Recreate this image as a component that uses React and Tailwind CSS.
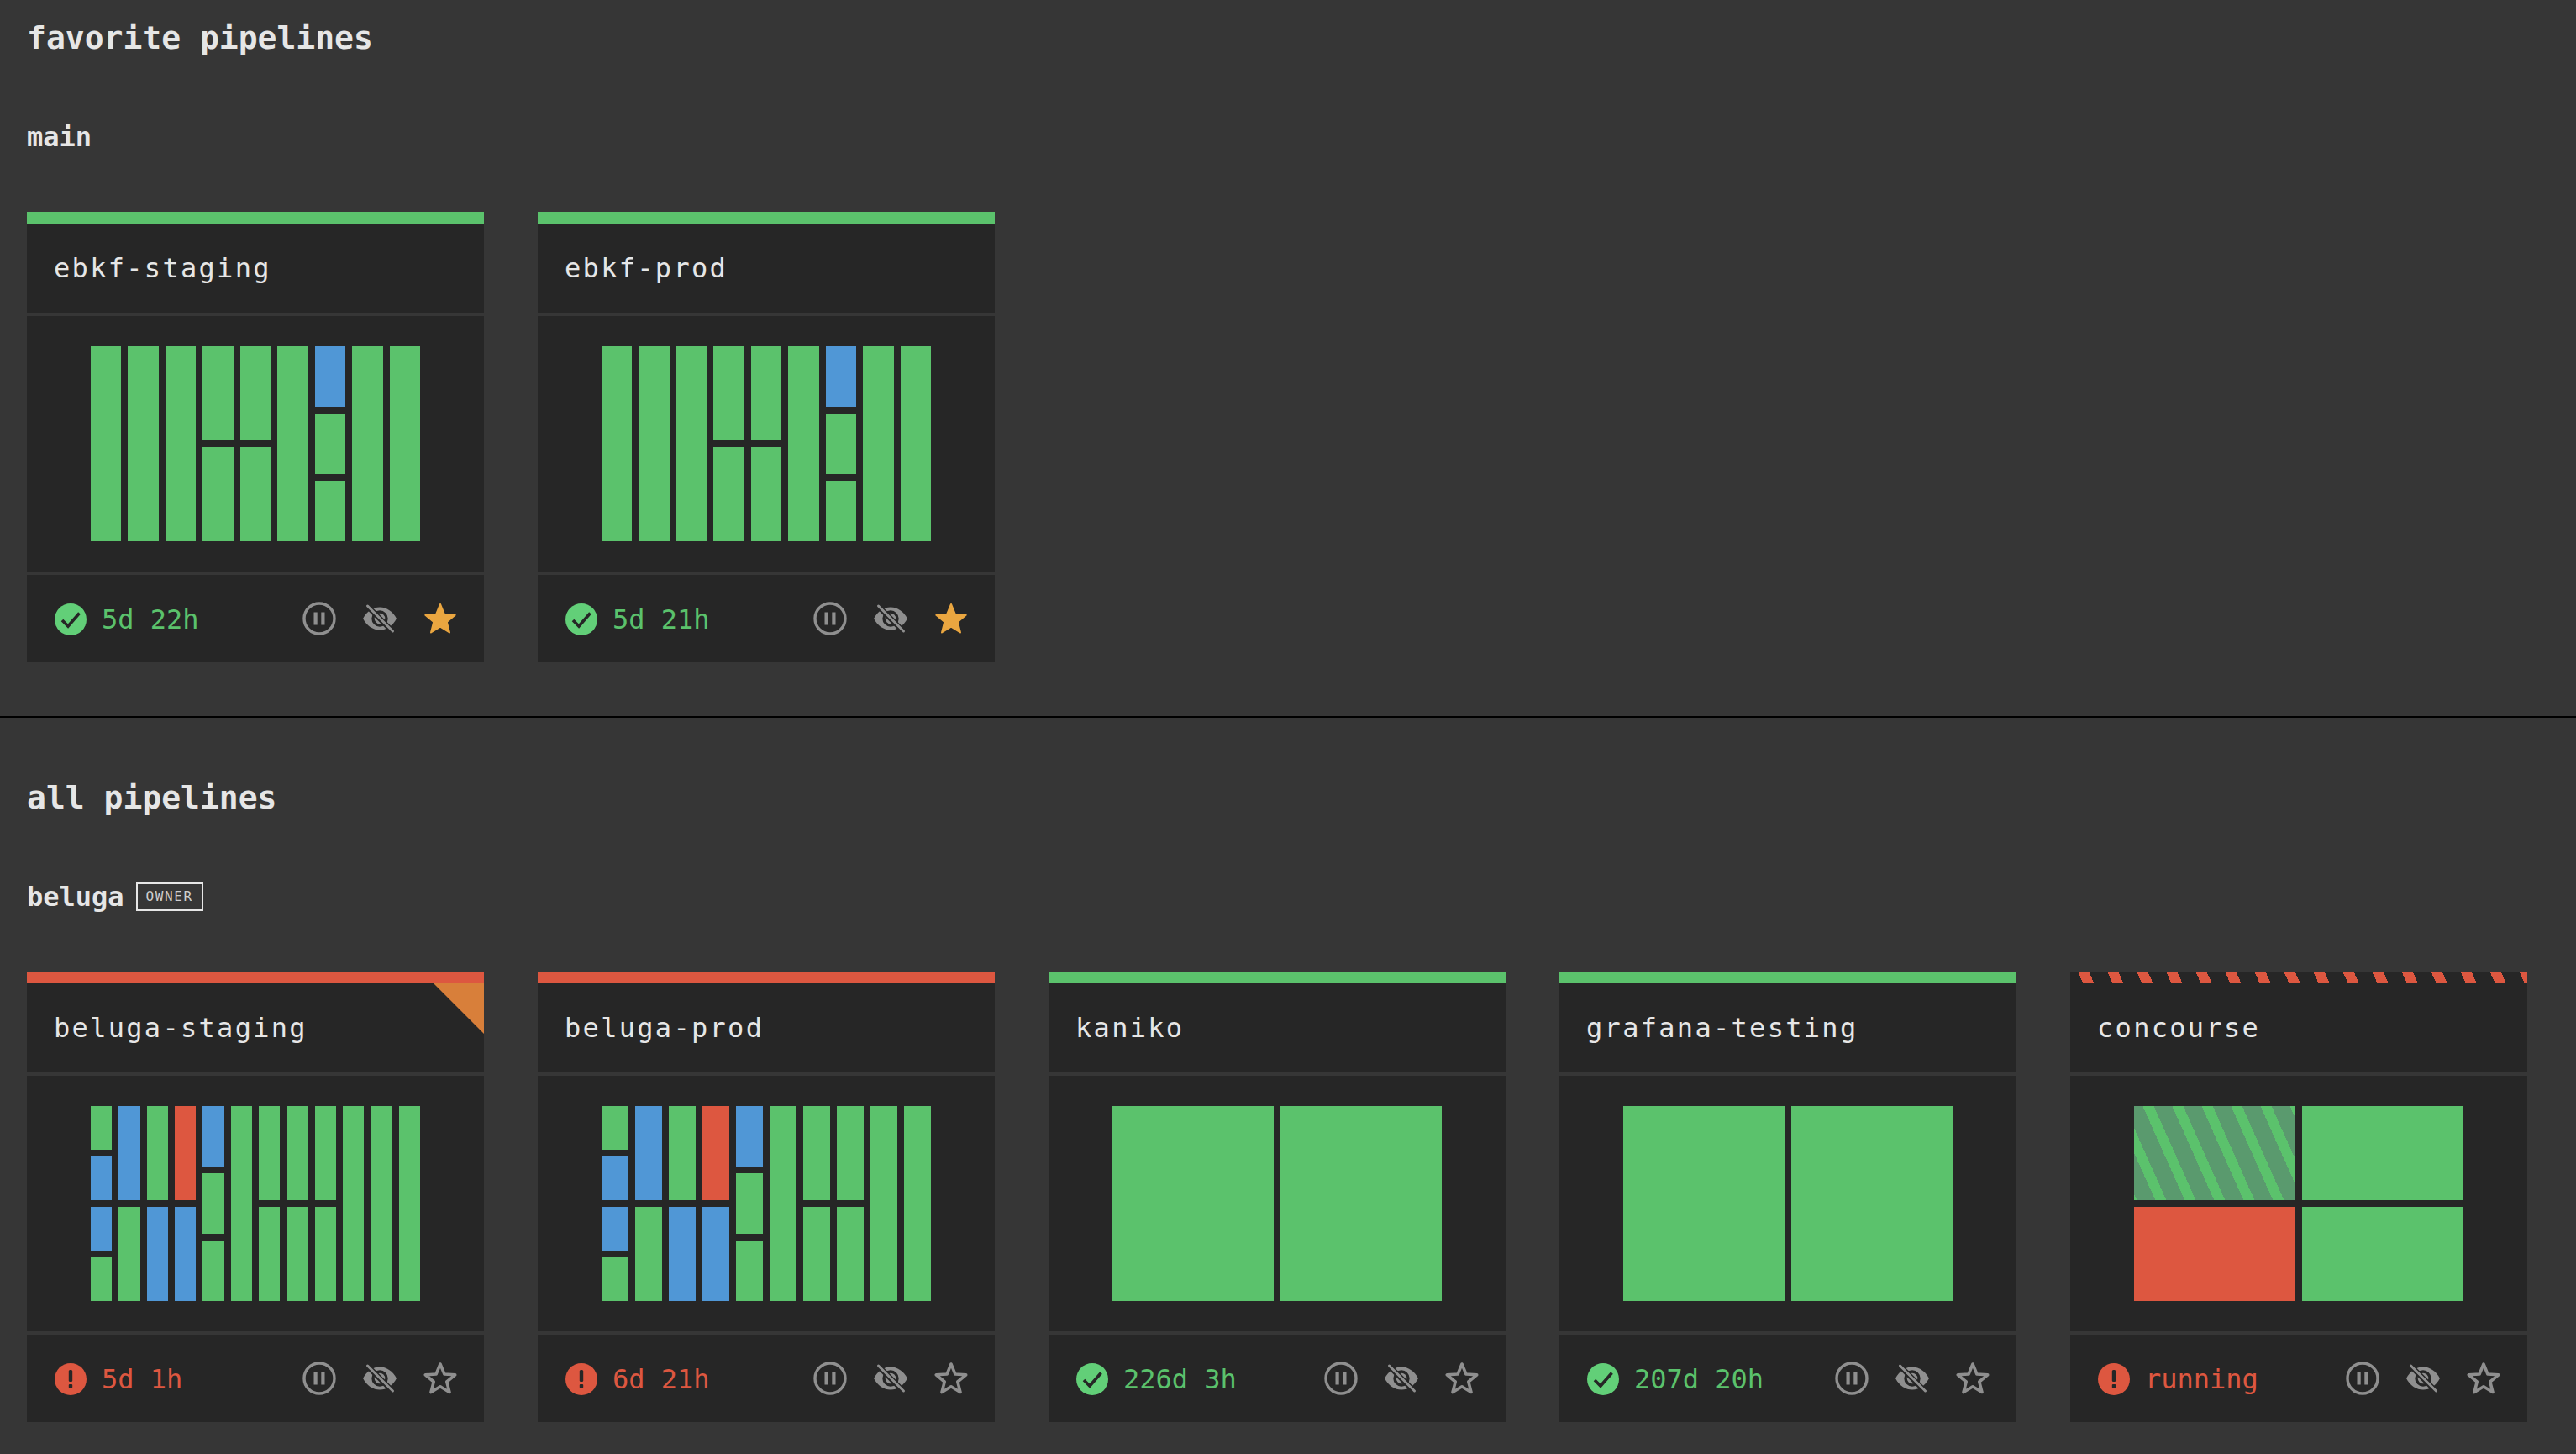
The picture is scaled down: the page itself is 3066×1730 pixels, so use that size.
import React from "react";

const FONT = "font-['DejaVu_Sans_Mono',monospace]";

const tint = {
  g: "bg-[#5bc26c]",
  b: "bg-[#5097d6]",
  r: "bg-[#dd5740]",
  s: "bg-[repeating-linear-gradient(66deg,#5bc26c_-9px,#5bc26c_3px,#5a9a6e_3px,#5a9a6e_23px)]",
};

const favBars = ["g", "g", "g", "gg", "gg", "g", "bgg", "g", "g"];
const stagingBars = ["gbbg", "bg", "gb", "rb", "bgg", "g", "gg", "gg", "gg", "g", "g", "g"];
const prodBars = ["gbbg", "bg", "gb", "rb", "bgg", "g", "gg", "gg", "g", "g"];

const CheckIcon = () => (
  <svg width="40" height="40" viewBox="0 0 40 40" className="shrink-0">
    <circle cx="20" cy="21" r="19" fill="#62cf78" />
    <path d="M10 22l7 7L30.500 13.500" fill="none" stroke="#262626" strokeWidth="3.600" />
  </svg>
);

const FailIcon = () => (
  <svg width="40" height="40" viewBox="0 0 40 40" className="shrink-0">
    <circle cx="20" cy="21" r="19" fill="#dd5740" />
    <rect x="17.8" y="10" width="4.4" height="14" rx="1.5" fill="#262626" />
    <rect x="17.8" y="27" width="4.4" height="4.4" rx="1" fill="#262626" />
  </svg>
);

const PauseIcon = () => (
  <svg width="40" height="40" viewBox="0 0 40 40">
    <circle cx="20" cy="20" r="18" fill="none" stroke="#8f8f8f" strokeWidth="3.4" />
    <rect x="13.5" y="12.5" width="4.2" height="15" fill="#8f8f8f" />
    <rect x="22.3" y="12.5" width="4.2" height="15" fill="#8f8f8f" />
  </svg>
);

const EyeOffIcon = () => (
  <svg width="40" height="40" viewBox="0 0 40 40">
    <path d="M0 20C5 11 12 6.5 20 6.5S35 11 40 20C35 29 28 33.5 20 33.5S5 29 0 20Z" fill="#8f8f8f" />
    <circle cx="20" cy="20" r="8" fill="none" stroke="#262626" strokeWidth="3.4" />
    <path d="M7 7l29 29" stroke="#262626" strokeWidth="6.5" />
    <path d="M5.5 5l30 30" stroke="#8f8f8f" strokeWidth="3" strokeLinecap="round" />
  </svg>
);

const StarIcon = ({ on }) => (
  <svg width="40" height="40" viewBox="0 0 40 40">
    <polygon
      points="20,3 24.9,15 37.7,15.8 27.8,24 31,36.5 20,29.7 9,36.5 12.2,24 2.3,15.8 15.1,15"
      fill={on ? "#eaa640" : "none"}
      stroke={on ? "#eaa640" : "#8f8f8f"}
      strokeWidth={on ? 2 : 3.6}
      strokeLinejoin="round"
    />
  </svg>
);

const Graph = ({ bars }) => (
  <div className="h-[304px] bg-[#262626] px-[76px] py-9 flex gap-2">
    {bars.map((col, i) => (
      <div key={i} className="flex-1 min-w-0 flex flex-col gap-2">
        {col.split("").map((c, j) => (
          <div key={j} className={`flex-1 ${tint[c]}`} />
        ))}
      </div>
    ))}
  </div>
);

const Card = ({ name, bars, time, status, top = "g", fav, corner }) => {
  const topClass =
    top === "g"
      ? "bg-[#5bc26c]"
      : top === "r"
        ? "bg-[#dd5740]"
        : "bg-[repeating-linear-gradient(66deg,#262626_-6px,#262626_14px,#dd5740_14px,#dd5740_26px)]";
  return (
    <div className="w-[544px] shrink-0 flex flex-col gap-1">
      <div className="-mb-1">
        <div className={`h-[14px] ${topClass}`} />
        <div className="relative h-[106px] bg-[#262626] pl-8 flex items-center text-[32px] tracking-[2.3px] text-[#e6e6e6]">
          <span>{name}</span>
          {corner && (
            <div className="absolute top-0 right-0 w-[60px] h-[60px] bg-[#d87f3a] [clip-path:polygon(0_0,100%_0,100%_100%)]" />
          )}
        </div>
      </div>
      <div className="mt-1">
        <Graph bars={bars} />
      </div>
      <div className="h-[104px] bg-[#262626] px-8 flex items-center justify-between">
        <div className={`flex items-center gap-[17px] text-[32px] ${status === "ok" ? "text-[#5bc26c]" : "text-[#dd5740]"}`}>
          {status === "ok" ? <CheckIcon /> : <FailIcon />}
          <span className="whitespace-pre mt-0.5">{time}</span>
        </div>
        <div className="flex items-center gap-8">
          <PauseIcon />
          <EyeOffIcon />
          <StarIcon on={fav} />
        </div>
      </div>
    </div>
  );
};

export default function App() {
  return (
    <div className={`min-h-screen overflow-hidden bg-[#363636] text-[#e6e6e6] ${FONT}`}>
      <section className="px-8 pb-16">
        <h1 className="h-[90px] flex items-center text-[38px] font-bold">favorite pipelines</h1>
        <h2 className="mt-7 mb-11 h-[90px] flex items-center text-[32px] font-bold">main</h2>
        <div className="flex gap-16">
          <Card name="ebkf-staging" bars={favBars} time="5d 22h" status="ok" fav />
          <Card name="ebkf-prod" bars={favBars} time="5d 21h" status="ok" fav />
        </div>
      </section>
      <section className="border-t-2 border-black px-8 pt-[50px]">
        <h1 className="h-[90px] flex items-center text-[38px] font-bold">all pipelines</h1>
        <h2 className="mt-7 mb-11 h-[90px] flex items-center text-[32px] font-bold">
          beluga
          <span className="ml-[14px] w-20 h-[34px] border-2 border-[#e6e6e6] flex items-center justify-center text-base font-normal tracking-[1.6px] text-[#cfcfcf]">
            OWNER
          </span>
        </h2>
        <div className="flex gap-16">
          <Card name="beluga-staging" bars={stagingBars} time="5d 1h" status="fail" top="r" corner />
          <Card name="beluga-prod" bars={prodBars} time="6d 21h" status="fail" top="r" />
          <Card name="kaniko" bars={["g", "g"]} time="226d 3h" status="ok" />
          <Card name="grafana-testing" bars={["g", "g"]} time="207d 20h" status="ok" />
          <Card name="concourse" bars={["sr", "gg"]} time="running" status="fail" top="s" />
        </div>
      </section>
    </div>
  );
}
